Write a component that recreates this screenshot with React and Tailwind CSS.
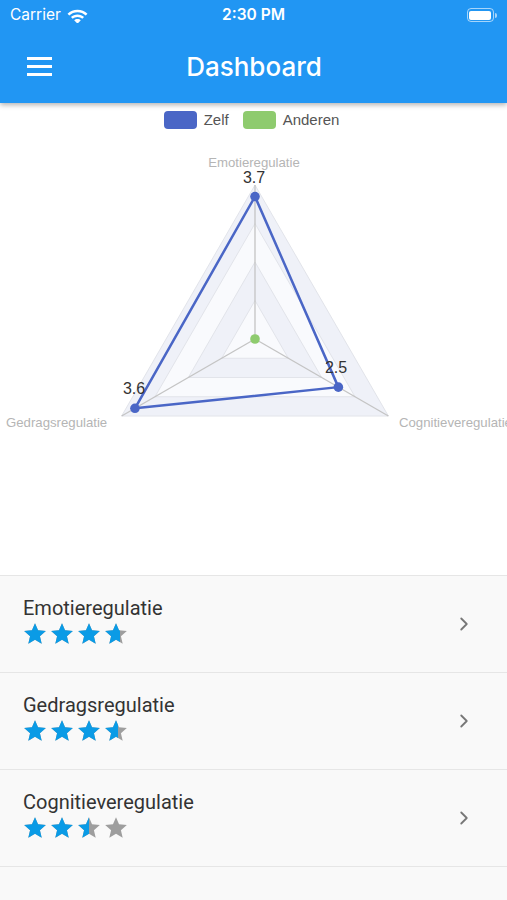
import { ChevronRight } from 'lucide-react'

const CX = 255
const CY = 339
const R = 154
const MAX = 4

// angles: top, bottom-right, bottom-left (clockwise like chart.js)
const ANGLES = [-90, 30, 150]

const pt = (value, i) => {
  const a = (ANGLES[i] * Math.PI) / 180
  const d = (value / MAX) * R
  return [CX + d * Math.cos(a), CY + d * Math.sin(a)]
}

const poly = (vals) => vals.map((v, i) => pt(v, i).join(',')).join(' ')

const ZELF = [3.7, 2.5, 3.6]

const ITEMS = [
  { label: 'Emotieregulatie', score: 3.7 },
  { label: 'Gedragsregulatie', score: 3.6 },
  { label: 'Cognitieveregulatie', score: 2.5 },
]

const STAR = 'M12 17.27L18.18 21l-1.64-7.03L22 9.24l-7.19-.61L12 2 9.19 8.63 2 9.24l5.46 4.73L5.82 21z'

function Star({ fill }) {
  return (
    <div className="relative w-[26px] h-[26px]">
      <svg viewBox="0 0 24 24" className="absolute inset-0 w-[26px] h-[26px]">
        <path d={STAR} fill="#9e9e9e" />
      </svg>
      <div className="absolute inset-y-0 left-0 overflow-hidden" style={{ width: `${Math.round((2 + fill * 20) / 24 * 26)}px` }}>
        <svg viewBox="0 0 24 24" className="w-[26px] h-[26px]">
          <path d={STAR} fill="#0a9be6" />
        </svg>
      </div>
    </div>
  )
}

function Radar() {
  return (
    <svg viewBox="0 133 507 442" className="w-[507px] h-[442px] block">
      {[4, 3, 2, 1].map(l => (
        <polygon
          key={l}
          points={poly([l, l, l])}
          fill={l % 2 === 0 ? '#eff1f8' : '#f9fafd'}
          stroke="#e2e4ea"
          strokeWidth="1"
        />
      ))}
      {[0, 1, 2].map(i => {
        const [x, y] = pt(MAX, i)
        return <line key={i} x1={CX} y1={CY} x2={x} y2={y} stroke="#c4c4c4" strokeWidth="1.3" />
      })}

      <polygon points={poly(ZELF)} fill="none" stroke="#4a66c6" strokeWidth="2.5" strokeLinejoin="round" />
      {ZELF.map((v, i) => {
        const [x, y] = pt(v, i)
        return <circle key={i} cx={x} cy={y} r="4.8" fill="#4a66c6" />
      })}
      <circle cx={CX} cy={CY} r="4.8" fill="#8ecb6e" />

      <g style={{ fontFamily: '"Liberation Sans", Arial, sans-serif' }}>
        <text x="254" y="167" textAnchor="middle" fontSize="13.2" fill="#b5b5b5">Emotieregulatie</text>
        <text x="6" y="427" fontSize="13.2" fill="#b5b5b5">Gedragsregulatie</text>
        <text x="399" y="427" fontSize="13.2" fill="#b5b5b5">Cognitieveregulatie</text>

        <text x="254" y="183" textAnchor="middle" fontSize="16" fill="#333">3.7</text>
        <text x="336" y="373" textAnchor="middle" fontSize="16" fill="#333">2.5</text>
        <text x="134" y="394" textAnchor="middle" fontSize="16" fill="#333">3.6</text>
      </g>
    </svg>
  )
}

export default function App() {
  return (
    <div className="w-[507px] h-[900px] overflow-hidden flex flex-col bg-white font-['Roboto',sans-serif]">

      {/* Header */}
      <div className="relative z-10 bg-[#2196f3] shadow-[0_2px_5px_rgba(0,0,0,0.3)]">
        <div className="h-[30px] flex items-center justify-between px-[10px] text-white text-[15.5px] font-['Inter',sans-serif]">
          <div className="flex items-center gap-[6px] w-[120px]">
            <span>Carrier</span>
            <svg viewBox="0 0 24 18" className="w-[21px] h-[16px]" fill="white">
              <path d="M12 3C7.6 3 3.6 4.7 0.6 7.5l2 2.1C5.1 7.3 8.4 5.9 12 5.9s6.9 1.4 9.4 3.7l2-2.1C20.4 4.7 16.4 3 12 3z" />
              <path d="M12 8.4c-2.9 0-5.5 1.1-7.5 2.9l2.1 2.1c1.4-1.3 3.3-2.1 5.4-2.1s4 .8 5.4 2.1l2.1-2.1c-2-1.8-4.6-2.9-7.5-2.9z" />
              <path d="M12 13.6c-1.5 0-2.8.6-3.8 1.5L12 18.9l3.8-3.8c-1-.9-2.3-1.5-3.8-1.5z" />
            </svg>
          </div>
          <span className="font-semibold">2:30 PM</span>
          <div className="w-[120px] flex justify-end items-center">
            <div className="w-[27px] h-[14px] rounded-[4px] border border-white/60 p-[1.5px]">
              <div className="w-full h-full rounded-[2px] bg-white" />
            </div>
            <div className="w-[2px] h-[5px] rounded-r bg-white/60 ml-[1px]" />
          </div>
        </div>
        <div className="h-[73px] flex items-center relative">
          <div className="absolute left-[27px] top-[27px] flex flex-col gap-[5px]">
            <div className="w-[25px] h-[3px] bg-white" />
            <div className="w-[25px] h-[3px] bg-white" />
            <div className="w-[25px] h-[3px] bg-white" />
          </div>
          <h1 className="w-full text-center text-white text-[26px] font-medium pl-[1px] font-['Inter',sans-serif]">Dashboard</h1>
        </div>
      </div>

      {/* Chart */}
      <div className="h-[472px] shrink-0">
        <div className="h-[30px] pt-[6px] flex justify-center items-start gap-[8px] text-[15px] text-[#555] font-['Liberation_Sans',sans-serif]">
          <div className="flex items-center gap-[7px] -ml-[4px]">
            <div className="w-[33px] h-[18px] rounded-[4px] bg-[#4a66c6]" />
            <span>Zelf</span>
          </div>
          <div className="flex items-center gap-[7px] ml-[6px]">
            <div className="w-[33px] h-[18px] rounded-[4px] bg-[#8ecb6e]" />
            <span>Anderen</span>
          </div>
        </div>
        <Radar />
      </div>

      {/* List */}
      <div className="flex-1 bg-[#f9f9f9] border-t border-[#e6e6e6]">
        {ITEMS.map(item => (
          <div key={item.label} className="h-[97px] border-b border-[#e6e6e6] flex items-start pl-[23px] pr-[32px] pt-[20px]">
            <div className="flex-1">
              <div className="text-[20px] leading-[24px] text-[#333]">{item.label}</div>
              <div className="flex gap-[1px] -ml-[1px] mt-[1px]">
                {[0, 1, 2, 3].map(i => (
                  <Star key={i} fill={Math.max(0, Math.min(1, item.score - i))} />
                ))}
              </div>
            </div>
            <ChevronRight className="w-[22px] h-[22px] text-[#777] mt-[17px]" strokeWidth={2} />
          </div>
        ))}
      </div>
    </div>
  )
}
